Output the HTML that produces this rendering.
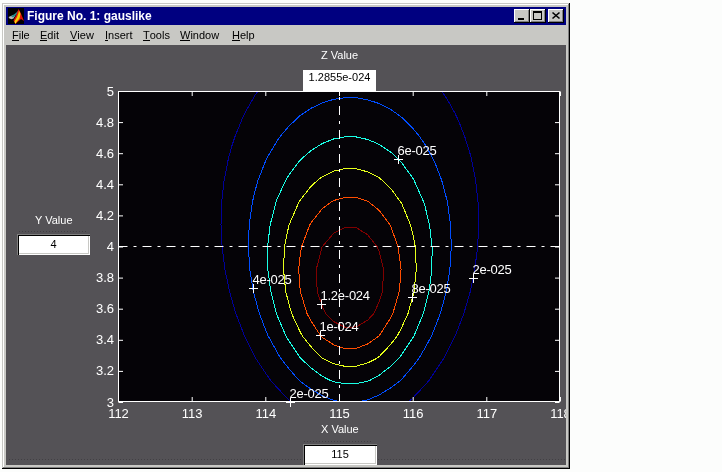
<!DOCTYPE html>
<html><head><meta charset="utf-8">
<style>
html,body{margin:0;padding:0;}
body{width:722px;height:472px;background:#fcfdfc;position:relative;overflow:hidden;font-family:"Liberation Sans",sans-serif;}
.abs{position:absolute;will-change:transform;}
#win{left:2px;top:3px;width:568px;height:466px;background:#c8c8c4;}
#b1{left:2px;top:3px;width:567px;height:465px;border-left:1px solid #c8c8c4;border-top:1px solid #c8c8c4;}
#title{left:6px;top:7px;width:560px;height:18px;background:#000080;}
#ttext{left:27px;top:8px;color:#fff;font-weight:bold;font-size:12px;line-height:16px;white-space:nowrap;}
.btn{top:9px;width:16px;height:14px;background:#c8c8c4;box-sizing:border-box;
 box-shadow: inset -1px -1px #000000, inset 1px 1px #ffffff, inset -2px -2px #808080, inset 2px 2px #c8c8c4;}
#menu{left:6px;top:25px;width:560px;height:20px;}
.mi{top:28px;font-size:11px;line-height:14px;color:#000;white-space:nowrap;}
.mi u{text-decoration:none;border-bottom:1px solid #000;display:inline-block;line-height:10px;}
#fig{left:6px;top:45px;width:560px;height:420px;background:#545256;}
.edit{background:#fff;box-sizing:border-box;font-size:11px;color:#000;text-align:center;}
.lbl{font-size:11px;color:#ffffff;white-space:nowrap;}
svg text{font-family:"Liberation Sans",sans-serif;}
</style></head><body>
<div id="win" class="abs"></div>
<div class="abs" style="left:2px;top:3px;width:567px;height:1px;background:#c8c8c4"></div>
<div class="abs" style="left:3px;top:4px;width:565px;height:1px;background:#ffffff"></div>
<div class="abs" style="left:3px;top:4px;width:1px;height:463px;background:#ffffff"></div>
<div class="abs" style="left:569px;top:3px;width:1px;height:466px;background:#000000"></div>
<div class="abs" style="left:2px;top:468px;width:568px;height:1px;background:#000000"></div>
<div class="abs" style="left:568px;top:4px;width:1px;height:464px;background:#808080"></div>
<div class="abs" style="left:3px;top:467px;width:566px;height:1px;background:#808080"></div>

<div id="title" class="abs"></div>
<div class="abs" style="left:8px;top:8px;width:16px;height:16px;background:#000;">
<svg width="16" height="16" viewBox="0 0 16 16">
<path d="M0.5 9 L3.5 7.8 L6.5 6.5 L7 8 L5.5 10.5 L3.5 11.2 L1.5 10.5 Z" fill="#b8b8b8"/>
<path d="M3 8.3 L6 6.5 L9 4 L10.5 2.5 L10 5 L7.5 7.5 L5 9.5 Z" fill="#208c8c"/>
<path d="M10.5 1 L12.5 4.5 L16 13 L13 11 L9 14.5 L7.5 16 L5.5 12.5 L8 7.5 Z" fill="#e01008"/>
<path d="M11 2.5 L12.5 6 L11.5 10.5 L9 13.5 L7.5 15.5 L6.5 13.5 L9 9 L10.5 5 Z" fill="#f0d000"/>
<path d="M8 14 L7.5 15.8 L6.5 13.8 Z" fill="#ffff20"/>
</svg></div>
<div id="ttext" class="abs">Figure No. 1: gauslike</div>
<div class="abs btn" style="left:514px"><div class="abs" style="left:4px;top:9px;width:6px;height:2px;background:#000"></div></div>
<div class="abs btn" style="left:530px"><div class="abs" style="left:3px;top:2px;width:9px;height:9px;box-sizing:border-box;border:1px solid #000;border-top-width:2px"></div></div>
<div class="abs btn" style="left:548px"><svg class="abs" style="left:0;top:0" width="16" height="14"><path d="M4.5 3.5L11.5 9.5M11.5 3.5L4.5 9.5" stroke="#000" stroke-width="1.6"/></svg></div>

<div class="abs mi" style="left:12px"><u>F</u>ile</div>
<div class="abs mi" style="left:40px"><u>E</u>dit</div>
<div class="abs mi" style="left:70px"><u>V</u>iew</div>
<div class="abs mi" style="left:105px"><u>I</u>nsert</div>
<div class="abs mi" style="left:143px"><u>T</u>ools</div>
<div class="abs mi" style="left:180px"><u>W</u>indow</div>
<div class="abs mi" style="left:232px"><u>H</u>elp</div>

<div id="fig" class="abs"></div>

<svg class="abs" style="left:0;top:0" width="722" height="472">
<defs><clipPath id="ax"><rect x="119" y="92" width="441" height="310"/></clipPath>
<clipPath id="figc"><rect x="6" y="45" width="560" height="420"/></clipPath></defs>
<g clip-path="url(#figc)">
<rect x="118" y="91" width="442" height="311" fill="#050307"/>
<g clip-path="url(#ax)" fill="none" stroke-width="1" shape-rendering="crispEdges">
<path d="M257.6 91.5 L254.5 96.1 L244.5 113.7 L243.2 116.5 L235.2 135.9 L231.8 146.2 L228.5 158.1 L224.1 180.4 L221.6 202.6 L221.0 224.8 L222.1 247.0 L224.9 269.2 L229.5 291.4 L231.8 299.7 L235.9 313.6 L243.2 332.7 L244.4 335.9 L254.5 355.9 L255.6 358.1 L265.8 373.4 L270.6 380.3 L277.2 387.7 L288.5 399.6 L291.6 402.5M408.1 402.5 L413.2 397.6 L424.5 385.6 L429.1 380.3 L435.8 370.5 L444.0 358.1 L447.2 352.0 L455.2 335.9 L458.5 327.5 L463.8 313.6 L469.8 293.2 L470.3 291.4 L474.8 269.2 L477.6 247.0 L478.7 224.8 L478.1 202.6 L475.6 180.4 L471.3 158.1 L469.8 152.8 L464.5 135.9 L458.5 120.8 L455.2 113.7 L447.2 99.3 L442.1 91.5" stroke="#00009a"/>
<path d="M350.6 402.5 L356.5 402.4 L367.8 399.8 L379.2 394.9 L390.5 388.0 L400.7 380.3 L401.8 379.2 L413.2 365.8 L419.1 358.1 L424.5 348.8 L431.6 335.9 L435.8 325.3 L440.3 313.6 L446.4 291.4 L447.2 286.7 L449.9 269.2 L451.3 247.0 L450.5 224.8 L447.5 202.6 L447.2 200.9 L441.7 180.4 L435.8 164.9 L432.7 158.1 L424.5 143.7 L419.0 135.9 L413.2 128.7 L401.8 117.5 L396.8 113.7 L390.5 109.4 L379.2 103.6 L367.8 99.8 L356.5 97.8 L345.2 97.7 L333.8 99.3 L322.5 102.8 L311.2 108.2 L302.9 113.7 L299.8 115.9 L288.5 126.6 L280.6 135.9 L277.2 140.7 L266.9 158.1 L265.8 160.4 L258.0 180.4 L254.5 193.0 L252.3 202.6 L249.2 224.8 L248.4 247.0 L249.8 269.2 L253.3 291.4 L254.5 295.8 L259.4 313.6 L265.8 330.3 L268.1 335.9 L277.2 352.3 L280.6 358.1 L288.5 368.2 L299.0 380.3 L299.8 381.0 L311.2 389.3 L322.5 395.9 L333.8 400.4 L344.7 402.5" stroke="#004dff"/>
<path d="M390.5 151.9 L379.2 144.4 L367.8 139.5 L356.5 137.0 L345.2 136.8 L333.8 138.9 L322.5 143.4 L311.2 150.4 L302.3 158.1 L299.8 160.6 L288.5 175.6 L285.7 180.4 L277.2 198.8 L275.8 202.6 L270.2 224.8 L267.5 247.0 L267.8 269.2 L270.8 291.4 L276.4 313.6 L277.2 315.6 L285.9 335.9 L288.5 340.3 L299.8 357.3 L300.4 358.1 L311.2 368.0 L322.5 376.4 L330.0 380.3 L333.8 381.7 L345.2 383.8 L356.5 383.6 L367.8 381.1 L370.0 380.3 L379.2 375.2 L390.5 366.4 L399.1 358.1 L401.8 354.5 L413.2 337.2 L414.0 335.9 L423.3 313.6 L424.5 309.2 L429.0 291.4 L431.9 269.2 L432.1 247.0 L429.5 224.8 L424.5 204.2 L424.0 202.6 L414.1 180.4 L413.2 178.7 L401.8 162.9 L397.4 158.1 L390.5 151.9" stroke="#1affe6"/>
<path d="M379.2 177.8 L367.8 171.9 L356.5 168.8 L345.2 168.6 L333.8 171.1 L322.5 176.6 L317.5 180.4 L311.2 186.1 L299.8 200.6 L298.7 202.6 L289.1 224.8 L288.5 227.1 L284.5 247.0 L283.5 269.2 L285.7 291.4 L288.5 302.3 L291.7 313.6 L299.8 331.2 L302.3 335.9 L311.2 346.9 L322.2 358.1 L322.5 358.3 L333.8 363.7 L345.2 366.4 L356.5 366.1 L367.8 362.9 L377.2 358.1 L379.2 356.6 L390.5 344.6 L397.3 335.9 L401.8 327.2 L408.0 313.6 L413.2 295.1 L414.1 291.4 L416.3 269.2 L415.3 247.0 L413.2 235.9 L410.5 224.8 L401.8 203.9 L401.1 202.6 L390.5 188.2 L382.3 180.4 L379.2 177.8" stroke="#e6ff1a"/>
<path d="M367.8 201.4 L356.5 197.6 L345.2 197.3 L333.8 200.5 L330.4 202.6 L322.5 208.5 L311.2 222.4 L309.8 224.8 L301.5 247.0 L299.8 258.4 L298.7 269.2 L299.8 285.9 L300.3 291.4 L307.0 313.6 L311.2 321.4 L320.8 335.9 L322.5 337.5 L333.8 344.9 L345.2 348.7 L356.5 348.3 L367.8 343.9 L379.2 335.9 L379.2 335.8 L390.5 318.1 L392.8 313.6 L399.3 291.4 L401.1 269.2 L398.1 247.0 L390.5 225.7 L390.0 224.8 L379.2 210.5 L369.6 202.6 L367.8 201.4" stroke="#ff4d00"/>
<path d="M367.8 234.9 L356.5 227.8 L345.2 227.3 L333.8 233.2 L322.5 246.3 L322.1 247.0 L316.3 269.2 L317.2 291.4 L322.5 306.7 L325.8 313.6 L333.8 321.7 L345.2 327.4 L356.5 326.9 L367.8 320.1 L373.8 313.6 L379.2 301.7 L382.6 291.4 L383.5 269.2 L379.2 251.7 L377.3 247.0 L367.8 234.9" stroke="#800000"/>
</g>
<path d="M118.5 246.5H559" stroke="#fff" stroke-dasharray="9 6 3 6" fill="none"/>
<path d="M339.5 91V401" stroke="#fff" stroke-dasharray="9 6 3 6" stroke-dashoffset="9" fill="none"/>
<path d="M339.5 92V96" stroke="#fff" fill="none"/>
<rect x="118.5" y="91.5" width="441" height="310" fill="none" stroke="#fff"/>
<path d="M118.5 401.5V397M118.5 91.5V96M192.2 401.5V397M192.2 91.5V96M265.8 401.5V397M265.8 91.5V96M339.5 401.5V397M339.5 91.5V96M413.2 401.5V397M413.2 91.5V96M486.8 401.5V397M486.8 91.5V96M560.5 401.5V397M560.5 91.5V96M118.5 91.5H123M559.5 91.5H555M118.5 122.6H123M559.5 122.6H555M118.5 153.7H123M559.5 153.7H555M118.5 184.8H123M559.5 184.8H555M118.5 215.9H123M559.5 215.9H555M118.5 247.0H123M559.5 247.0H555M118.5 278.1H123M559.5 278.1H555M118.5 309.2H123M559.5 309.2H555M118.5 340.3H123M559.5 340.3H555M118.5 371.4H123M559.5 371.4H555M118.5 402.5H123M559.5 402.5H555" stroke="#fff" fill="none"/>
<path d="M394 159.5H403M398.5 155V164M249 288.5H258M253.5 284V293M317 304.5H326M321.5 300V309M316 335.5H325M320.5 331V340M408 297.5H417M412.5 293V302M469 278.5H478M473.5 274V283M286 402.5H295M290.5 398V407" stroke="#fff" fill="none"/>
<g fill="#fff" font-size="13" letter-spacing="-0.25"><text x="397.5" y="155">6e-025</text><text x="252.5" y="284">4e-025</text><text x="320.5" y="300">1.2e-024</text><text x="319.5" y="331">1e-024</text><text x="411.5" y="293">8e-025</text><text x="472.5" y="274">2e-025</text><text x="289.5" y="398">2e-025</text></g>
<g fill="#fff" font-size="13"><text x="118.5" y="418" text-anchor="middle">112</text><text x="192.2" y="418" text-anchor="middle">113</text><text x="265.8" y="418" text-anchor="middle">114</text><text x="339.5" y="418" text-anchor="middle">115</text><text x="413.2" y="418" text-anchor="middle">116</text><text x="486.8" y="418" text-anchor="middle">117</text><text x="560.5" y="418" text-anchor="middle">118</text><text x="114" y="95.5" text-anchor="end">5</text><text x="114" y="126.6" text-anchor="end">4.8</text><text x="114" y="157.7" text-anchor="end">4.6</text><text x="114" y="188.8" text-anchor="end">4.4</text><text x="114" y="219.9" text-anchor="end">4.2</text><text x="114" y="251.0" text-anchor="end">4</text><text x="114" y="282.1" text-anchor="end">3.8</text><text x="114" y="313.2" text-anchor="end">3.6</text><text x="114" y="344.3" text-anchor="end">3.4</text><text x="114" y="375.4" text-anchor="end">3.2</text><text x="114" y="406.5" text-anchor="end">3</text></g>
<path d="M19 231.5H87M304 441.5H372M9 459.5H565" stroke="#424044" stroke-dasharray="1 2" fill="none"/>
</g>
</svg>

<div class="abs lbl" style="left:321px;top:49px;">Z Value</div>
<div class="abs edit" style="left:303px;top:70px;width:73px;height:21px;padding-top:1px;line-height:13px;">1.2855e-024</div>
<div class="abs lbl" style="left:35px;top:214px;">Y Value</div>
<div class="abs edit" style="left:17px;top:234px;width:73px;height:21px;line-height:21px;box-shadow:inset 1px 1px #808080, inset 2px 2px #000, inset -1px -1px #fff, inset -2px -2px #c8c8c4;">4</div>
<div class="abs lbl" style="left:321px;top:423px;">X Value</div>
<div class="abs edit" style="left:303px;top:444px;width:74px;height:21px;line-height:21px;box-shadow:inset 1px 1px #808080, inset 2px 2px #000, inset -1px -1px #fff, inset -2px -2px #c8c8c4;">115</div>
</body></html>
